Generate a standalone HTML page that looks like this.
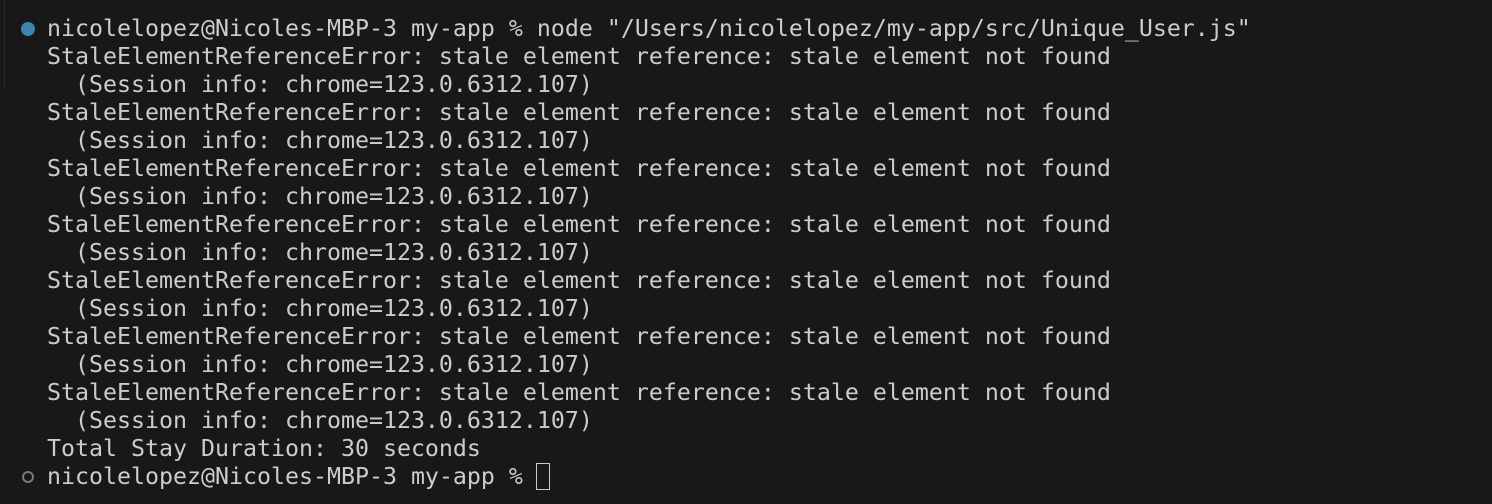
<!DOCTYPE html>
<html><head><style>
body{margin:0;width:1492px;height:504px;background:#181818;overflow:hidden;position:relative;font-family:"DejaVu Sans Mono","Liberation Mono",monospace;}
.t{position:absolute;left:47px;top:15px;color:#cccccc;font-size:23.25px;line-height:28px;white-space:pre;}
.dot{position:absolute;border-radius:50%;}
.cur{position:absolute;left:536px;top:463px;width:12px;height:25px;border:1.5px solid #cccccc;}
.vl{position:absolute;left:4px;top:0;width:1px;height:88px;background:#2a2a2a;}
</style></head><body>
<div class="vl"></div>
<div class="dot" style="left:21px;top:22px;width:14px;height:14px;background:#3d85b0"></div>
<div class="dot" style="left:22px;top:471px;width:12px;height:12px;border:2px solid #7a7a7a;box-sizing:border-box"></div>
<div class="t">nicolelopez@Nicoles-MBP-3 my-app % node "/Users/nicolelopez/my-app/src/Unique_User.js"
StaleElementReferenceError: stale element reference: stale element not found
  (Session info: chrome=123.0.6312.107)
StaleElementReferenceError: stale element reference: stale element not found
  (Session info: chrome=123.0.6312.107)
StaleElementReferenceError: stale element reference: stale element not found
  (Session info: chrome=123.0.6312.107)
StaleElementReferenceError: stale element reference: stale element not found
  (Session info: chrome=123.0.6312.107)
StaleElementReferenceError: stale element reference: stale element not found
  (Session info: chrome=123.0.6312.107)
StaleElementReferenceError: stale element reference: stale element not found
  (Session info: chrome=123.0.6312.107)
StaleElementReferenceError: stale element reference: stale element not found
  (Session info: chrome=123.0.6312.107)
Total Stay Duration: 30 seconds
nicolelopez@Nicoles-MBP-3 my-app % </div>
<div class="cur"></div>
</body></html>
